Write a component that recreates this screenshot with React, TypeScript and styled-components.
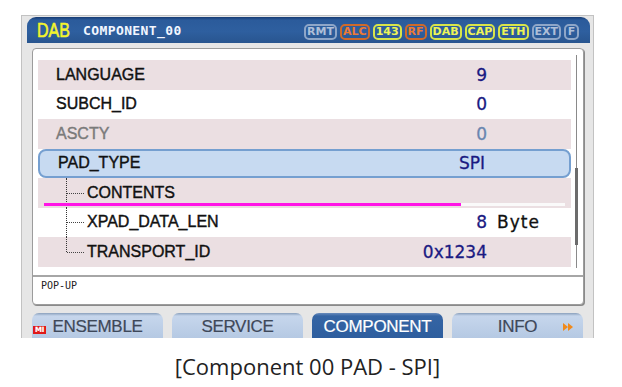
import { createGlobalStyle, styled } from 'styled-components'

const GlobalStyle = createGlobalStyle`
  html, body {
    margin: 0;
    padding: 0;
    background: #fff;
  }
  body {
    font-family: 'Liberation Sans', Arial, sans-serif;
  }
`

const Page = styled.div`
  width: 622px;
  height: 387px;
  box-sizing: border-box;
  padding: 15px 0 0 21px;
`

const Figure = styled.div`
  width: 573px;
  display: flex;
  flex-direction: column;
`

const Device = styled.div`
  height: 323px;
  box-sizing: border-box;
  background: #e6e6e6;
  border: 1px solid #c2c2c2;
  border-bottom: none;
  display: flex;
  flex-direction: column;
`

const Header = styled.div`
  margin: 1px 3px 0 5px;
  height: 26px;
  box-sizing: border-box;
  border-radius: 9px 9px 0 0;
  background: linear-gradient(#163a72 0, #2b5b9b 3px, #2e5f9f 55%, #28558f 100%);
  display: flex;
  align-items: center;
  padding: 0 11px 0 10px;
`

const Band = styled.span`
  display: inline-block;
  color: #f4f42c;
  font-size: 20px;
  line-height: 20px;
  -webkit-text-stroke: 0.6px currentColor;
  transform: scaleX(0.8);
  transform-origin: left center;
  width: 32px;
`

const Title = styled.span`
  margin-left: 14px;
  color: #f2f6ff;
  font-family: 'DejaVu Sans Mono', monospace;
  font-weight: bold;
  font-size: 13px;
  letter-spacing: 0.4px;
`

const Badges = styled.div`
  margin-left: auto;
  margin-top: 4px;
  display: flex;
  gap: 3px;
`

const badgeColors = {
  gray: { text: '#aebfd8', border: '#8ea6c8' },
  orange: { text: '#ec7a34', border: '#cf6a2a' },
  yellow: { text: '#eef456', border: '#d8e44a' },
}

const Badge = styled.span<{ $tone: keyof typeof badgeColors }>`
  height: 16px;
  min-width: 15px;
  box-sizing: border-box;
  padding: 0 1px;
  border: 2px solid ${(p) => badgeColors[p.$tone].border};
  border-radius: 5px;
  color: ${(p) => badgeColors[p.$tone].text};
  font-family: 'DejaVu Sans', sans-serif;
  font-weight: bold;
  font-size: 11px;
  line-height: 12px;
  text-align: center;
`

const Panel = styled.div`
  margin: 5px 9px 0 10px;
  height: 257px;
  box-sizing: border-box;
  background: #fff;
  border: 1px solid #9c9c9c;
  border-radius: 4px;
  box-shadow: 1px 1px 0 #8a8a8a;
  display: flex;
  flex-direction: column;
`

const Body = styled.div`
  display: flex;
  align-items: flex-start;
  padding: 11px 0 0 5px;
  height: 215px;
`

const List = styled.div`
  flex: 1;
  display: flex;
  flex-direction: column;
`

const Row = styled.div<{ $shade?: boolean; $selected?: boolean; $dim?: boolean }>`
  position: relative;
  height: 29.5px;
  box-sizing: border-box;
  display: grid;
  grid-template-columns: 1fr auto 84px;
  align-items: center;
  background: ${(p) => (p.$selected ? '#c7daf1' : p.$shade ? '#ebdfe2' : '#fff')};
  border: ${(p) => (p.$selected ? '2px solid #759fd0' : 'none')};
  border-radius: ${(p) => (p.$selected ? '8px' : '0')};
  color: ${(p) => (p.$dim ? '#7a7a7a' : '#111')};
`

const Label = styled.div<{ $child?: boolean }>`
  display: flex;
  align-items: center;
  height: 100%;
  padding-left: ${(p) => (p.$child ? '28px' : '18px')};
  font-size: 16px;
  -webkit-text-stroke: 0.4px currentColor;
`

const Guide = styled.span<{ $last?: boolean }>`
  position: relative;
  align-self: stretch;
  width: 21px;
  flex: none;
  &::before {
    content: '';
    position: absolute;
    left: 0;
    top: 0;
    height: ${(p) => (p.$last ? '50%' : '100%')};
    border-left: 1px dotted #333;
  }
  &::after {
    content: '';
    position: absolute;
    left: 1px;
    width: 17px;
    top: 50%;
    border-top: 1px dotted #444;
  }
`

const Value = styled.div<{ $dim?: boolean }>`
  text-align: right;
  font-family: 'DejaVu Sans', sans-serif;
  font-size: 17px;
  -webkit-text-stroke: 0.3px currentColor;
  color: ${(p) => (p.$dim ? '#6a86b0' : '#1a1a82')};
`

const Unit = styled.div`
  padding-left: 10px;
  font-family: 'DejaVu Sans', sans-serif;
  font-size: 17px;
  letter-spacing: 1px;
  -webkit-text-stroke: 0.3px currentColor;
  color: #111;
`

const Progress = styled.div`
  position: absolute;
  left: 6px;
  right: 6px;
  bottom: 2px;
  height: 3px;
  background: #fafafa;
`

const ProgressFill = styled.div`
  height: 100%;
  background: #ff14e6;
`

const Scroll = styled.div`
  position: relative;
  width: 12px;
  height: 213px;
  margin-top: -5px;
  flex: none;
  &::before {
    content: '';
    position: absolute;
    left: 5px;
    top: 0;
    bottom: 0;
    border-left: 1px solid #8a8a8a;
  }
`

const Thumb = styled.div`
  position: absolute;
  left: 4px;
  width: 3px;
  top: 113px;
  height: 77px;
  background: #6c6c6c;
`

const Footer = styled.div`
  flex: 1;
  border-top: 2px solid #a6a6a6;
  padding: 3px 0 0 8px;
  font-family: 'DejaVu Sans Mono', monospace;
  font-size: 10px;
  color: #222;
`

const Tabs = styled.div`
  margin-top: 8px;
  flex: 1;
  display: flex;
  gap: 9px;
  padding: 0 10px;
`

const Tab = styled.div<{ $active?: boolean }>`
  flex: 1;
  position: relative;
  border-radius: 7px 7px 0 0;
  display: flex;
  align-items: center;
  justify-content: center;
  padding-top: 2px;
  font-size: 17px;
  letter-spacing: -0.3px;
  -webkit-text-stroke: 0.2px currentColor;
  color: ${(p) => (p.$active ? '#fff' : '#3e4859')};
  background: ${(p) =>
    p.$active
      ? 'linear-gradient(#6a8cbc 0, #3565a4 3px, #2e5e9e 100%)'
      : 'linear-gradient(#8aa0bc 0, #c6d6ec 3px, #b5c9e3 100%)'};
`

const MiMark = styled.span`
  position: absolute;
  left: 1px;
  bottom: 4px;
  width: 13px;
  height: 8px;
  background: #e01a1a;
  color: #fff;
  font-family: 'DejaVu Sans', sans-serif;
  font-weight: bold;
  font-size: 7px;
  line-height: 8px;
  text-align: center;
`

const NextMark = styled.svg`
  position: absolute;
  right: 10px;
  top: 10px;
`

const Caption = styled.div`
  margin-top: 13px;
  text-align: center;
  font-family: 'Open Sans', 'Noto Sans', sans-serif;
  font-size: 22px;
  line-height: 30px;
  color: #222;
`

type Item = {
  label: string
  value: string
  unit?: string
  child?: boolean
  last?: boolean
  dim?: boolean
  selected?: boolean
  progress?: number
}

const items: Item[] = [
  { label: 'LANGUAGE', value: '9' },
  { label: 'SUBCH_ID', value: '0' },
  { label: 'ASCTY', value: '0', dim: true },
  { label: 'PAD_TYPE', value: 'SPI', selected: true },
  { label: 'CONTENTS', value: '', child: true, progress: 80 },
  { label: 'XPAD_DATA_LEN', value: '8', unit: 'Byte', child: true },
  { label: 'TRANSPORT_ID', value: '0x1234', child: true, last: true },
]

const badges: { text: string; tone: keyof typeof badgeColors }[] = [
  { text: 'RMT', tone: 'gray' },
  { text: 'ALC', tone: 'orange' },
  { text: '143', tone: 'yellow' },
  { text: 'RF', tone: 'orange' },
  { text: 'DAB', tone: 'yellow' },
  { text: 'CAP', tone: 'yellow' },
  { text: 'ETH', tone: 'yellow' },
  { text: 'EXT', tone: 'gray' },
  { text: 'F', tone: 'gray' },
]

export default function App() {
  return (
    <Page>
      <GlobalStyle />
      <Figure>
        <Device>
          <Header>
            <Band>DAB</Band>
            <Title>COMPONENT_00</Title>
            <Badges>
              {badges.map((b) => (
                <Badge key={b.text} $tone={b.tone}>
                  {b.text}
                </Badge>
              ))}
            </Badges>
          </Header>

          <Panel>
            <Body>
              <List>
                {items.map((it, i) => (
                  <Row key={it.label} $shade={i % 2 === 0} $selected={it.selected} $dim={it.dim}>
                    <Label $child={it.child}>
                      {it.child && <Guide $last={it.last} />}
                      {it.label}
                    </Label>
                    <Value $dim={it.dim}>{it.value}</Value>
                    <Unit>{it.unit}</Unit>
                    {it.progress !== undefined && (
                      <Progress>
                        <ProgressFill style={{ width: `${it.progress}%` }} />
                      </Progress>
                    )}
                  </Row>
                ))}
              </List>
              <Scroll>
                <Thumb />
              </Scroll>
            </Body>
            <Footer>POP-UP</Footer>
          </Panel>

          <Tabs>
            <Tab>
              <MiMark>MI</MiMark>
              ENSEMBLE
            </Tab>
            <Tab>SERVICE</Tab>
            <Tab $active>COMPONENT</Tab>
            <Tab>
              INFO
              <NextMark width="10" height="8" viewBox="0 0 10 8">
                <path d="M0 0 L5 4 L0 8 Z M5 0 L10 4 L5 8 Z" fill="#f08a1c" />
              </NextMark>
            </Tab>
          </Tabs>
        </Device>
        <Caption>[Component 00 PAD - SPI]</Caption>
      </Figure>
    </Page>
  )
}
